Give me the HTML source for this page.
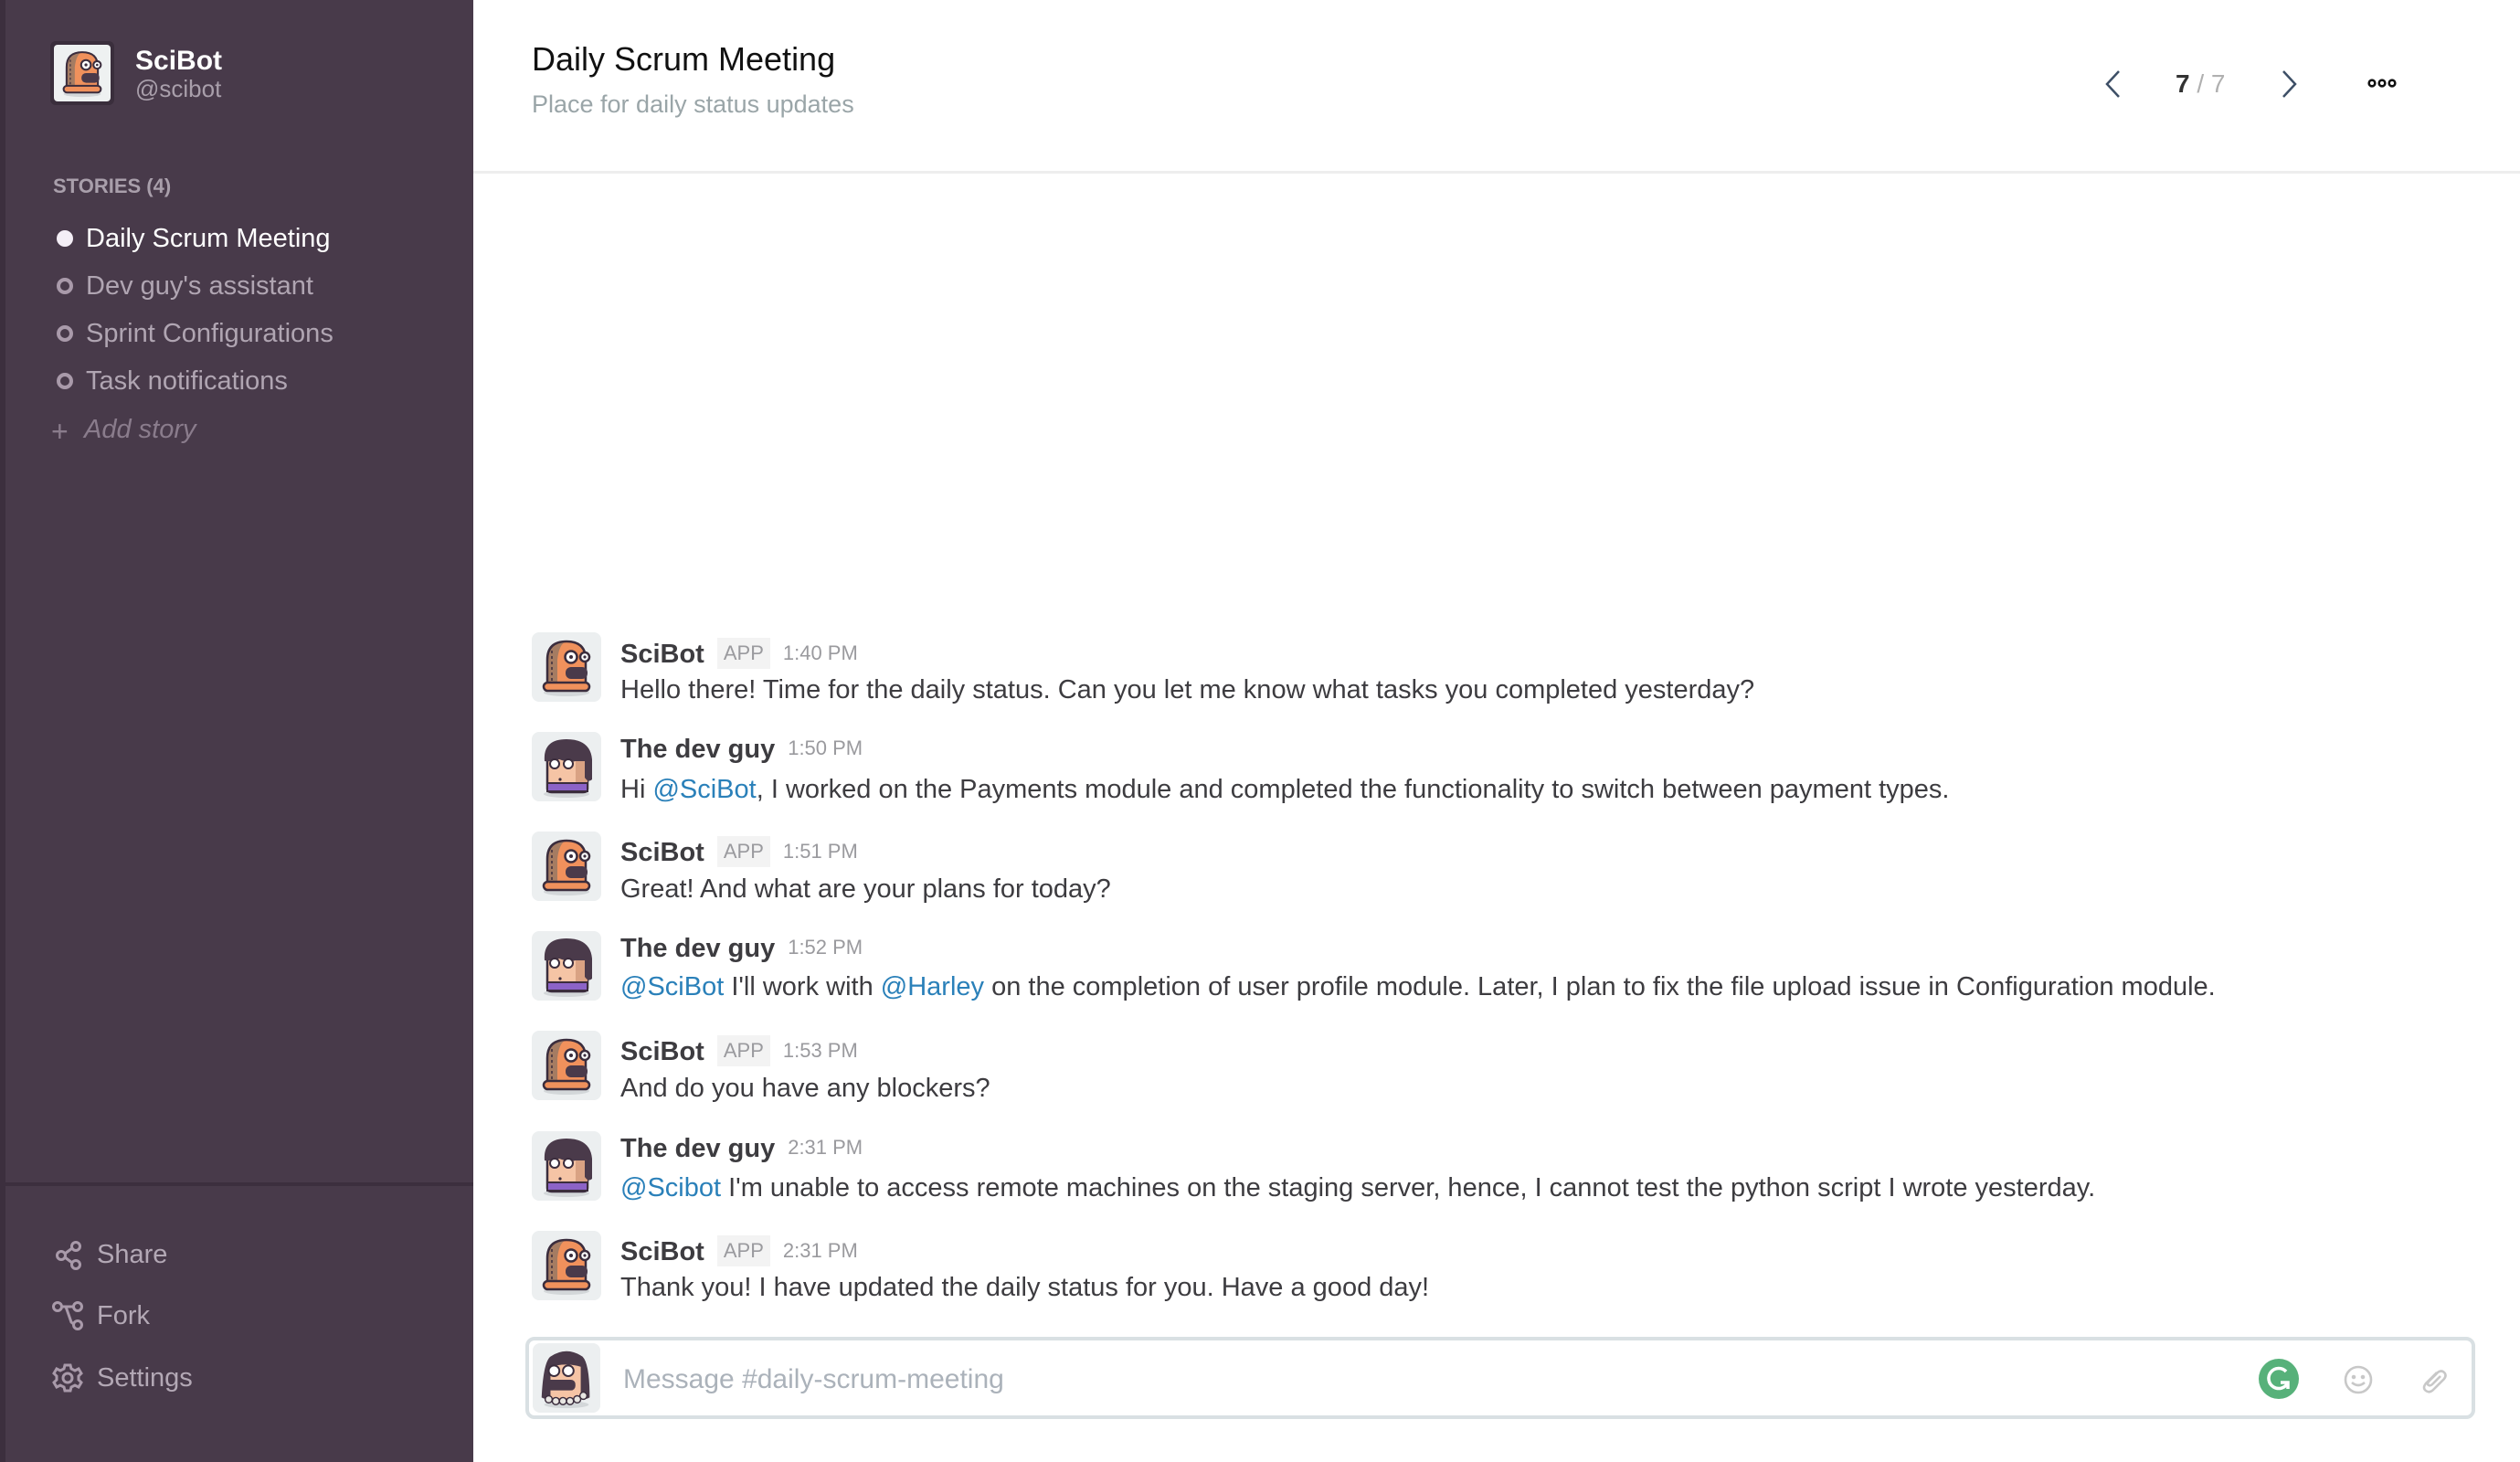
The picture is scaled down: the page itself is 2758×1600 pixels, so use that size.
<!DOCTYPE html>
<html><head><meta charset="utf-8">
<style>
*{margin:0;padding:0;box-sizing:border-box}
body{width:2758px;height:1600px;overflow:hidden;background:#fff;font-family:"Liberation Sans",sans-serif;position:relative}
.side{position:absolute;left:0;top:0;width:518px;height:1600px;background:#483a4a;border-left:6px solid #3c2f3e}
.abs{position:absolute;white-space:nowrap}
.item{position:absolute;left:88px;font-size:29px;color:#b0a5b2;line-height:1}
.bul{position:absolute;left:56px;width:18px;height:18px;border-radius:50%;border:4px solid #a99aaa}
.bot{position:absolute;left:100px;font-size:29px;color:#b3a8b5;line-height:1}
.av{position:absolute;left:582px;width:76px;height:76px;border-radius:8px;background:#eceff0}
.name{position:absolute;left:679px;font-size:29px;font-weight:bold;color:#3d3c40;line-height:1;white-space:nowrap}
.name .app{display:inline-block;font-weight:normal;font-size:22px;color:#9a9a9e;background:#f3f3f3;padding:6px 7px;margin-left:14px;vertical-align:3px}
.name .t{font-weight:normal;font-size:22px;color:#9a9a9e;margin-left:14px;vertical-align:3px}
.msg{position:absolute;left:679px;font-size:29px;color:#3d3c40;line-height:1;white-space:nowrap}
.m{color:#2a80b9}
</style></head><body>
<svg width="0" height="0" style="position:absolute">
<defs>
<symbol id="bot" viewBox="0 0 76 76">
<ellipse cx="38" cy="66" rx="25" ry="4" fill="#d3d7d9"/>
<path d="M17 60 V30 Q17 10 38 10 Q59 10 59 30 V60 Z" fill="#f0915c"/>
<path d="M17 60 V30 Q17 10 38 10 Q30 12 28 30 V60 Z" fill="#a57c62"/>
<path d="M17 60 V30 Q17 10 38 10 Q59 10 59 30 V60" fill="none" stroke="#3b2d3d" stroke-width="2.5"/>
<rect x="13" y="55" width="50" height="9" rx="4.5" fill="#f0915c" stroke="#3b2d3d" stroke-width="2.5"/>
<path d="M22 20 V56" stroke="#3b2d3d" stroke-width="1.5" stroke-dasharray="3 3"/>
<circle cx="43" cy="27" r="6.5" fill="#fff" stroke="#3b2d3d" stroke-width="2.5"/><circle cx="43" cy="27" r="2" fill="#3b2d3d"/>
<circle cx="58" cy="27" r="5" fill="#fff" stroke="#3b2d3d" stroke-width="2.5"/><circle cx="58" cy="27" r="1.6" fill="#3b2d3d"/>
<rect x="37" y="38" width="24" height="13" rx="6" fill="#4a3a4a"/>
</symbol>
<symbol id="dev" viewBox="0 0 76 76">
<ellipse cx="38" cy="68" rx="25" ry="4" fill="#d3d7d9"/>
<path d="M17 28 V62 Q17 66 22 66 H56 Q61 66 61 62 V28 Z" fill="#f5c4a5" stroke="#3b2d3d" stroke-width="2.5"/>
<path d="M48 30 H61 V62 Q61 66 56 66 H48 Z" fill="#d9a283"/>
<rect x="17" y="56" width="44" height="9" fill="#8c63c7" stroke="#3b2d3d" stroke-width="2"/>
<path d="M14 32 Q12 8 38 8 Q64 8 66 30 V52 Q62 56 58 50 V32 H48 Q40 34 30 30 Q22 33 14 32 Z" fill="#4a3a4a"/>
<circle cx="25" cy="35" r="5" fill="#fff" stroke="#3b2d3d" stroke-width="2"/>
<circle cx="40" cy="35" r="5" fill="#fff" stroke="#3b2d3d" stroke-width="2"/>
<circle cx="31" cy="52" r="1.6" fill="#3b2d3d"/>
</symbol>
<symbol id="girl" viewBox="0 0 76 76">
<ellipse cx="38" cy="68" rx="25" ry="4" fill="#d3d7d9"/>
<path d="M10 60 Q12 20 20 14 Q38 2 56 14 Q64 22 64 60 Q58 64 52 58 V30 H24 V58 Q16 64 10 60 Z" fill="#4a3a4a"/>
<path d="M20 22 H54 V62 H20 Z" fill="#f5c4a5"/>
<path d="M18 18 Q38 6 56 18 V26 Q38 20 18 26 Z" fill="#4a3a4a"/>
<circle cx="24" cy="30" r="6" fill="#fff" stroke="#3b2d3d" stroke-width="2"/>
<circle cx="40" cy="30" r="6" fill="#fff" stroke="#3b2d3d" stroke-width="2"/>
<rect x="12" y="40" width="36" height="12" rx="5" fill="#4a3a4a"/>
<g fill="#e8e6e2" stroke="#3b2d3d" stroke-width="1.5"><circle cx="18" cy="62" r="4"/><circle cx="26" cy="64" r="4"/><circle cx="34" cy="64" r="4"/><circle cx="42" cy="64" r="4"/><circle cx="50" cy="62" r="4"/><circle cx="57" cy="58" r="4"/></g>
</symbol>
</defs></svg>

<div class="side">
  <div class="abs" style="left:49px;top:45px;width:70px;height:70px;border-radius:6px;background:#3a2e3c;padding:4px"><div style="background:#eef1f1;border-radius:4px;width:62px;height:62px"><svg width="62" height="62"><use href="#bot"/></svg></div></div>
  <div class="abs" style="left:142px;top:50px;font-size:30px;font-weight:bold;color:#fff">SciBot</div>
  <div class="abs" style="left:142px;top:82px;font-size:26px;color:#a99fab">@scibot</div>
  <div class="abs" style="left:52px;top:191px;font-size:22px;font-weight:bold;color:#a99fab">STORIES (4)</div>
  <div class="bul" style="top:252px;background:#f4eef6;border-color:#f4eef6"></div>
  <div class="item" style="top:247px;color:#fff">Daily Scrum Meeting</div>
  <div class="bul" style="top:304px"></div><div class="item" style="top:299px">Dev guy's assistant</div>
  <div class="bul" style="top:356px"></div><div class="item" style="top:351px">Sprint Configurations</div>
  <div class="bul" style="top:408px"></div><div class="item" style="top:403px">Task notifications</div>
  <div class="abs" style="left:50px;top:454px;font-size:32px;color:#8a7c8c">+</div>
  <div class="item" style="top:456px;left:86px;font-style:italic;color:#8a7c8c">Add story</div>
  <div class="abs" style="left:0;top:1294px;width:512px;height:4px;background:#3c2f3e"></div>
  <svg class="abs" style="left:52px;top:1357px" width="34" height="34" viewBox="0 0 34 34" fill="none" stroke="#a99aaa" stroke-width="3"><circle cx="25" cy="7" r="4.5"/><circle cx="9" cy="17" r="4.5"/><circle cx="25" cy="27" r="4.5"/><path d="M13 15 L21 9 M13 19 L21 25"/></svg>
  <div class="bot" style="top:1359px">Share</div>
  <svg class="abs" style="left:50px;top:1423px" width="36" height="34" viewBox="0 0 36 34" fill="none" stroke="#a99aaa" stroke-width="3"><circle cx="7" cy="7" r="4.5"/><circle cx="29" cy="7" r="4.5"/><circle cx="29" cy="27" r="4.5"/><path d="M11.5 7 H24.5 M16 7 L22 24 L24.5 26"/></svg>
  <div class="bot" style="top:1426px">Fork</div>
  <svg class="abs" style="left:51px;top:1491px" width="34" height="34" viewBox="0 0 34 34" fill="none" stroke="#a99aaa" stroke-width="3"><path d="M14 3 H20 L21 7 L25 9 L29 7 L32 12 L29 15 V19 L32 22 L29 27 L25 25 L21 27 L20 31 H14 L13 27 L9 25 L5 27 L2 22 L5 19 V15 L2 12 L5 7 L9 9 L13 7 Z"/><circle cx="17" cy="17" r="5"/></svg>
  <div class="bot" style="top:1494px">Settings</div>
</div>

<div class="abs" style="left:582px;top:44px;font-size:36px;color:#111">Daily Scrum Meeting</div>
<div class="abs" style="left:582px;top:99px;font-size:27px;color:#9aa5a8">Place for daily status updates</div>
<svg class="abs" style="left:2300px;top:75px" width="26" height="34" viewBox="0 0 26 34"><path d="M19 3 L6 17 L19 31" fill="none" stroke="#3d4f66" stroke-width="2.5"/></svg>
<div class="abs" style="left:2381px;top:76px;font-size:28px;color:#333;font-weight:bold">7<span style="font-weight:normal;color:#b0b0b0"> / 7</span></div>
<svg class="abs" style="left:2492px;top:75px" width="26" height="34" viewBox="0 0 26 34"><path d="M7 3 L20 17 L7 31" fill="none" stroke="#3d4f66" stroke-width="2.5"/></svg>
<svg class="abs" style="left:2591px;top:84px" width="32" height="14" viewBox="0 0 32 14" fill="none" stroke="#111" stroke-width="2.6"><circle cx="5" cy="7" r="3.3"/><circle cx="16" cy="7" r="3.3"/><circle cx="27" cy="7" r="3.3"/></svg>
<div class="abs" style="left:518px;top:187px;width:2240px;height:3px;background:#eeeeee"></div>

<div class="av" style="top:692px"><svg width="76" height="76"><use href="#bot"/></svg></div>
<div class="name" style="top:698px">SciBot<span class="app">APP</span><span class="t">1:40 PM</span></div>
<div class="msg" style="top:741px">Hello there! Time for the daily status. Can you let me know what tasks you completed yesterday?</div>

<div class="av" style="top:801px"><svg width="76" height="76"><use href="#dev"/></svg></div>
<div class="name" style="top:806px">The dev guy<span class="t">1:50 PM</span></div>
<div class="msg" style="top:850px">Hi <span class="m">@SciBot</span>, I worked on the Payments module and completed the functionality to switch between payment types.</div>

<div class="av" style="top:910px"><svg width="76" height="76"><use href="#bot"/></svg></div>
<div class="name" style="top:915px">SciBot<span class="app">APP</span><span class="t">1:51 PM</span></div>
<div class="msg" style="top:959px">Great! And what are your plans for today?</div>

<div class="av" style="top:1019px"><svg width="76" height="76"><use href="#dev"/></svg></div>
<div class="name" style="top:1024px">The dev guy<span class="t">1:52 PM</span></div>
<div class="msg" style="top:1066px"><span class="m">@SciBot</span> I'll work with <span class="m">@Harley</span> on the completion of user profile module. Later, I plan to fix the file upload issue in Configuration module.</div>

<div class="av" style="top:1128px"><svg width="76" height="76"><use href="#bot"/></svg></div>
<div class="name" style="top:1133px">SciBot<span class="app">APP</span><span class="t">1:53 PM</span></div>
<div class="msg" style="top:1177px">And do you have any blockers?</div>

<div class="av" style="top:1238px"><svg width="76" height="76"><use href="#dev"/></svg></div>
<div class="name" style="top:1243px">The dev guy<span class="t">2:31 PM</span></div>
<div class="msg" style="top:1286px"><span class="m">@Scibot</span> I'm unable to access remote machines on the staging server, hence, I cannot test the python script I wrote yesterday.</div>

<div class="av" style="top:1347px"><svg width="76" height="76"><use href="#bot"/></svg></div>
<div class="name" style="top:1352px">SciBot<span class="app">APP</span><span class="t">2:31 PM</span></div>
<div class="msg" style="top:1395px">Thank you! I have updated the daily status for you. Have a good day!</div>

<div class="abs" style="left:575px;top:1463px;width:2134px;height:90px;border:4px solid #d9e0e3;border-radius:10px;background:#fff"></div>
<div class="av" style="left:583px;top:1470px;width:74px;height:76px"><svg width="74" height="76"><use href="#girl"/></svg></div>
<div class="abs" style="left:682px;top:1493px;font-size:30px;color:#abb2ba">Message #daily-scrum-meeting</div>
<svg class="abs" style="left:2472px;top:1487px" width="44" height="44" viewBox="0 0 44 44"><circle cx="22" cy="22" r="22" fill="#57b17a"/><path d="M30 14 A11 11 0 1 0 32 26" fill="none" stroke="#fff" stroke-width="3.5"/><path d="M24 26 H32 V33" fill="none" stroke="#fff" stroke-width="3.5"/></svg>
<svg class="abs" style="left:2565px;top:1494px" width="32" height="32" viewBox="0 0 32 32" fill="none" stroke="#c8c8c8" stroke-width="2.6"><circle cx="16" cy="16" r="14"/><circle cx="11" cy="13" r="1" fill="#c8c8c8"/><circle cx="21" cy="13" r="1" fill="#c8c8c8"/><path d="M9 19 Q16 25 23 19"/></svg>
<svg class="abs" style="left:2647px;top:1494px" width="32" height="32" viewBox="0 0 32 32" fill="none" stroke="#c8c8c8" stroke-width="2.6"><path d="M20 8 L8 20 Q4 25 8 28 Q12 31 16 27 L28 15 Q31 11 28 8 Q25 5 21 8 L11 18 Q9 21 11 22 Q13 23 15 21 L24 12"/></svg>
</body></html>
